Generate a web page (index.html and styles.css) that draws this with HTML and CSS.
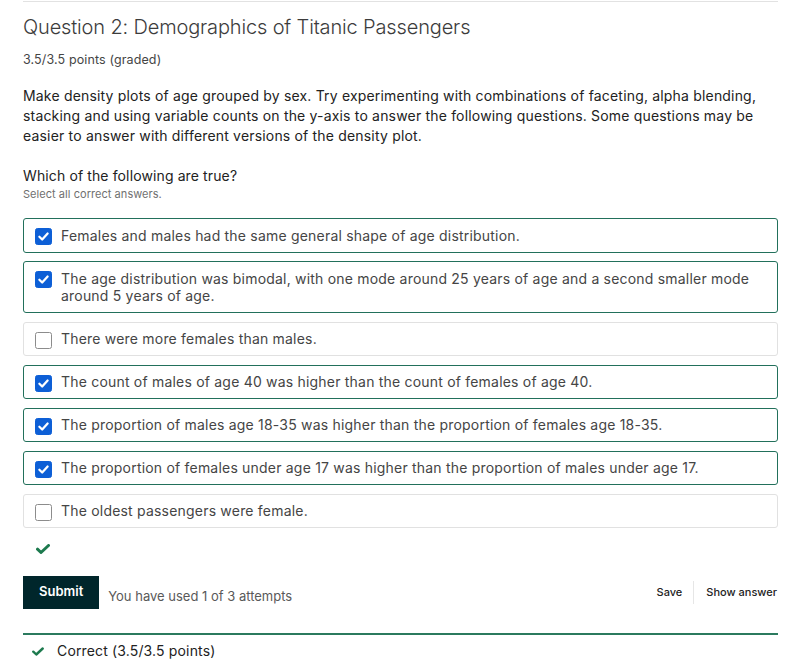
FILE: index.html
```html
<!DOCTYPE html>
<html lang="en">
<head>
<meta charset="utf-8">
<title>Question 2: Demographics of Titanic Passengers</title>
<link rel="stylesheet" href="styles.css">
</head>
<body>
<div class="wrap">
  <h2 class="title">Question 2: Demographics of Titanic Passengers</h2>
  <div class="meta">3.5/3.5 points (graded)</div>
  <p class="intro">Make density plots of age grouped by sex. Try experimenting with combinations of faceting, alpha blending, stacking and using variable counts on the y-axis to answer the following questions. Some questions may be easier to answer with different versions of the density plot.</p>
  <div class="prompt">Which of the following are true?</div>
  <div class="hint">Select all correct answers.</div>

  <div class="options">
    <label class="opt checked"><span class="box"><svg viewBox="0 0 16 16"><path d="M3.6 8.2l3 3 5.8-6.4" /></svg></span><span class="txt">Females and males had the same general shape of age distribution.</span></label>
    <label class="opt checked"><span class="box"><svg viewBox="0 0 16 16"><path d="M3.6 8.2l3 3 5.8-6.4" /></svg></span><span class="txt">The age distribution was bimodal, with one mode around 25 years of age and a second smaller mode around 5 years of age.</span></label>
    <label class="opt"><span class="box"></span><span class="txt">There were more females than males.</span></label>
    <label class="opt checked"><span class="box"><svg viewBox="0 0 16 16"><path d="M3.6 8.2l3 3 5.8-6.4" /></svg></span><span class="txt">The count of males of age 40 was higher than the count of females of age 40.</span></label>
    <label class="opt checked"><span class="box"><svg viewBox="0 0 16 16"><path d="M3.6 8.2l3 3 5.8-6.4" /></svg></span><span class="txt">The proportion of males age 18-35 was higher than the proportion of females age 18-35.</span></label>
    <label class="opt checked"><span class="box"><svg viewBox="0 0 16 16"><path d="M3.6 8.2l3 3 5.8-6.4" /></svg></span><span class="txt">The proportion of females under age 17 was higher than the proportion of males under age 17.</span></label>
    <label class="opt"><span class="box"></span><span class="txt">The oldest passengers were female.</span></label>
  </div>

  <div class="status"><svg class="ok" viewBox="0 0 14 10"><path d="M1.5 5.2l3.5 3.3 7.5-7" /></svg></div>

  <div class="actions">
    <button class="submit">Submit</button>
    <span class="attempts">You have used 1 of 3 attempts</span>
    <div class="links">
      <span class="link">Save</span>
      <span class="link sep">Show answer</span>
    </div>
  </div>

  <div class="result">
    <svg class="ok small" viewBox="0 0 14 10"><path d="M1.5 5.2l3.5 3.3 7.5-7" /></svg>
    <span>Correct (3.5/3.5 points)</span>
  </div>
</div>
</body>
</html>
```

FILE: styles.css
```css
* { box-sizing: border-box; }
html, body { margin: 0; padding: 0; background: #fff; }
body {
  font-family: Inter, "Open Sans", "Liberation Sans", sans-serif;
  color: #313131;
}
.wrap {
  margin: 1px 34px 0 23px;
  border-top: 1px solid #e2e2e2;
}
.title {
  margin: 13px 0 0;
  font-size: 20px;
  line-height: 24px;
  font-weight: 300;
  letter-spacing: -0.15px;
  color: #3c3c3c;
}
.meta {
  margin-top: 12.6px;
  font-size: 12.5px;
  line-height: 16px;
  letter-spacing: 0.12px;
  color: #454545;
}
.intro {
  margin: 18px 0 0;
  font-size: 14px;
  line-height: 20px;
  letter-spacing: 0.18px;
  color: #222;
}
.prompt {
  margin-top: 20.3px;
  font-size: 14px;
  line-height: 20px;
  letter-spacing: 0.12px;
  color: #222;
}
.hint {
  margin-top: 1px;
  font-size: 11px;
  line-height: 14px;
  letter-spacing: 0.05px;
  color: #707070;
}
.options {
  margin-top: 17.3px;
  display: flex;
  flex-direction: column;
  gap: 8.5px;
}
.opt {
  display: flex;
  align-items: flex-start;
  gap: 9px;
  padding: 7.5px 11px;
  border: 1px solid #e1e1e1;
  border-radius: 3px;
  font-size: 14px;
  line-height: 17.5px;
  letter-spacing: 0.2px;
  color: #454545;
}
.opt.checked { border-color: #22705b; }
.box {
  flex: 0 0 17px;
  width: 17px;
  height: 17px;
  margin-top: 1.5px;
  margin-bottom: -3px;
  border: 1.5px solid #8c8c8c;
  border-radius: 2.5px;
  background: #fff;
  display: flex;
}
.checked .box {
  background: #0d5fd6;
  border-color: #0d5fd6;
}
.box svg {
  width: 100%;
  height: 100%;
  fill: none;
  stroke: #fff;
  stroke-width: 2.4;
  stroke-linecap: round;
  stroke-linejoin: round;
}
.status {
  height: 10px;
  margin-top: 15.5px;
  padding-left: 13px;
  display: flex;
}
.ok {
  width: 14px;
  height: 10px;
  fill: none;
  stroke: #1d7a4e;
  stroke-width: 3;
  stroke-linecap: round;
  stroke-linejoin: round;
}
.actions {
  margin-top: 22px;
  display: flex;
  align-items: center;
}
.submit {
  height: 33px;
  padding: 0 16px 2px;
  border: 0;
  border-radius: 0;
  background: #00262b;
  color: #fff;
  font-family: Inter, "Liberation Sans", sans-serif;
  font-size: 13px;
  font-weight: 600;
  line-height: 31px;
}
.attempts {
  margin-left: 9px;
  margin-top: 8px;
  font-size: 13px;
  line-height: 16px;
  color: #595959;
}
.links {
  margin-left: auto;
  display: flex;
  align-items: center;
}
.link {
  font-size: 11px;
  font-weight: 500;
  line-height: 23px;
  color: #222;
  padding: 0 11px 0 0;
  margin-top: 1px;
}
.link.sep {
  border-left: 1px solid #e6e6e6;
  padding: 0 1px 0 12px;
}
.result {
  margin-top: 24.3px;
  border-top: 2px solid #2b7a5e;
  padding-top: 6.3px;
  padding-left: 9px;
  display: flex;
  align-items: center;
  gap: 13px;
  font-size: 14px;
  line-height: 20px;
  letter-spacing: 0.15px;
  color: #222;
}
.ok.small {
  width: 12px;
  height: 9px;
  stroke-width: 2.8;
}
```
